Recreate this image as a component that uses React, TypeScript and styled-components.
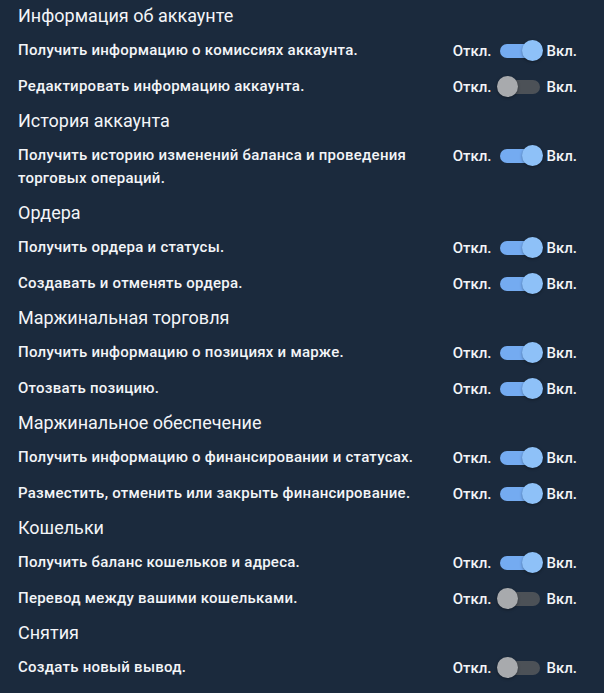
import styled, { createGlobalStyle } from 'styled-components';

type Permission = { label: string; enabled: boolean };
type Group = { title: string; items: Permission[] };

const groups: Group[] = [
  {
    title: 'Информация об аккаунте',
    items: [
      { label: 'Получить информацию о комиссиях аккаунта.', enabled: true },
      { label: 'Редактировать информацию аккаунта.', enabled: false },
    ],
  },
  {
    title: 'История аккаунта',
    items: [
      {
        label: 'Получить историю изменений баланса и проведения торговых операций.',
        enabled: true,
      },
    ],
  },
  {
    title: 'Ордера',
    items: [
      { label: 'Получить ордера и статусы.', enabled: true },
      { label: 'Создавать и отменять ордера.', enabled: true },
    ],
  },
  {
    title: 'Маржинальная торговля',
    items: [
      { label: 'Получить информацию о позициях и марже.', enabled: true },
      { label: 'Отозвать позицию.', enabled: true },
    ],
  },
  {
    title: 'Маржинальное обеспечение',
    items: [
      { label: 'Получить информацию о финансировании и статусах.', enabled: true },
      { label: 'Разместить, отменить или закрыть финансирование.', enabled: true },
    ],
  },
  {
    title: 'Кошельки',
    items: [
      { label: 'Получить баланс кошельков и адреса.', enabled: true },
      { label: 'Перевод между вашими кошельками.', enabled: false },
    ],
  },
  {
    title: 'Снятия',
    items: [{ label: 'Создать новый вывод.', enabled: false }],
  },
];

function App() {
  return (
    <>
      <GlobalStyle />
      <Page>
        {groups.map(group => (
          <section key={group.title}>
            <Heading>{group.title}</Heading>
            {group.items.map(item => (
              <Row key={item.label}>
                <Label>{item.label}</Label>
                <ToggleGroup>
                  <OffText>Откл.</OffText>
                  <Switch>
                    <Track $on={item.enabled} />
                    <Thumb $on={item.enabled} />
                  </Switch>
                  <OnText>Вкл.</OnText>
                </ToggleGroup>
              </Row>
            ))}
          </section>
        ))}
      </Page>
    </>
  );
}

const GlobalStyle = createGlobalStyle`
  html, body {
    margin: 0;
    background: #1b2a3d;
  }
  body {
    font-family: Roboto, "Liberation Sans", sans-serif;
    color: #f3f5f8;
  }
`;

const Page = styled.div`
  min-height: 693px;
  box-sizing: border-box;
  padding: 0 27px 0 18px;
  margin-top: -2px;
  background: #1b2a3d;
`;

const Heading = styled.h2`
  margin: 0;
  padding: 6px 0 3px;
  font-size: 18px;
  line-height: 24px;
  font-weight: 400;
`;

const Row = styled.div`
  display: flex;
  align-items: flex-start;
  padding: 8px 0 5px;
`;

const Label = styled.div`
  flex: 0 1 420px;
  font-size: 15px;
  line-height: 23px;
  font-weight: 500;
  letter-spacing: 0.25px;
`;

const ToggleGroup = styled.div`
  margin-left: auto;
  display: flex;
  align-items: center;
  height: 23px;
  font-size: 15px;
  font-weight: 500;
`;

const OffText = styled.span`
  margin-right: 6px;
`;

const OnText = styled.span`
  margin-left: 3px;
`;

const Switch = styled.span`
  position: relative;
  display: block;
  width: 46px;
  height: 22px;
`;

const Track = styled.span<{ $on: boolean }>`
  position: absolute;
  left: 3px;
  top: 4px;
  width: 40px;
  height: 14px;
  border-radius: 7px;
  background: ${p => (p.$on ? '#74abf1' : '#4c5157')};
`;

const Thumb = styled.span<{ $on: boolean }>`
  position: absolute;
  top: 0;
  left: ${p => (p.$on ? '25px' : '0')};
  width: 21px;
  height: 21px;
  border-radius: 50%;
  background: ${p => (p.$on ? '#8ec1f8' : '#a8aaad')};
  box-shadow: 0 1px 3px rgba(0, 0, 0, 0.35);
`;

export default App;
